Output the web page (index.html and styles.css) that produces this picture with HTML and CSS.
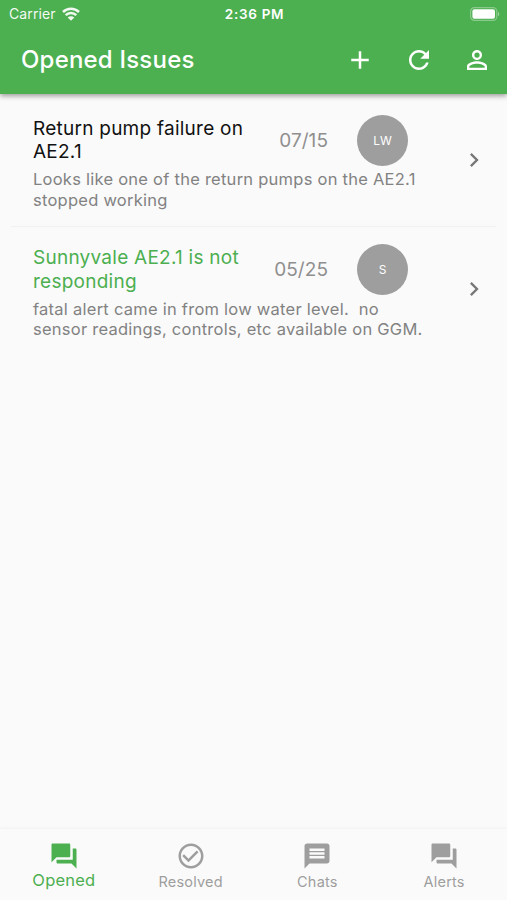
FILE: index.html
```
<!DOCTYPE html>
<html lang="en">
<head>
<meta charset="utf-8">
<title>Opened Issues</title>
<link rel="stylesheet" href="styles.css">
</head>
<body>
<svg class="defs" aria-hidden="true">
  <symbol id="forum" viewBox="0 0 24 24"><path d="M21 6h-2v9H6v2c0 .55.45 1 1 1h11l4 4V7c0-.55-.45-1-1-1zm-4 6V3c0-.55-.45-1-1-1H3c-.55 0-1 .45-1 1v14l4-4h10c.55 0 1-.45 1-1z"/></symbol>
  <symbol id="chevron" viewBox="0 0 24 24"><path d="M10 6 8.59 7.41 13.17 12l-4.58 4.59L10 18l6-6z"/></symbol>
</svg>
<div class="app">
  <header class="header">
    <div class="status">
      <div class="carrier"><span>Carrier</span>
        <svg class="wifi" viewBox="0 0 18 14"><path d="M1 5C5.400 .7 12.600 .7 17 5M3.700 8.200c3-2.900 7.600-2.900 10.600 0" fill="none" stroke="currentColor" stroke-width="2.500"/><path d="M5.700 10.500c1.900-1.800 4.700-1.800 6.600 0L9 13.800z"/></svg>
      </div>
      <div class="time">2:36 PM</div>
      <div class="power"><svg class="battery" viewBox="0 0 30 14"><rect x=".6" y=".6" width="26.200" height="12.800" rx="3.800" fill="none" stroke="currentColor" stroke-opacity=".35" stroke-width="1.200"/><rect x="2.400" y="2.300" width="22.600" height="9.400" rx="2"/><path d="M28 4.800c1.800.7 1.800 3.700 0 4.400z" opacity=".45"/></svg></div>
    </div>
    <div class="toolbar">
      <h1>Opened Issues</h1>
      <div class="actions">
        <svg viewBox="0 0 24 24"><path d="M19 13h-6v6h-2v-6H5v-2h6V5h2v6h6v2z"/></svg>
        <svg viewBox="0 0 24 24"><path d="M17.650 6.350C16.200 4.900 14.210 4 12 4c-4.420 0-7.990 3.580-7.990 8s3.570 8 7.990 8c3.730 0 6.840-2.550 7.730-6h-2.080c-.82 2.330-3.040 4-5.650 4-3.310 0-6-2.690-6-6s2.690-6 6-6c1.660 0 3.140.69 4.220 1.780L13 11h7V4l-2.350 2.350z"/></svg>
        <svg viewBox="0 0 24 24"><path d="M12 5.900a2.100 2.100 0 1 1 0 4.200 2.100 2.100 0 0 1 0-4.200m0 9c2.970 0 6.100 1.460 6.100 2.100v1.100H5.900V17c0-.64 3.130-2.100 6.100-2.100M12 4C9.790 4 8 5.790 8 8s1.790 4 4 4 4-1.790 4-4-1.790-4-4-4zm0 9c-2.670 0-8 1.340-8 4v3h16v-3c0-2.660-5.330-4-8-4z"/></svg>
      </div>
    </div>
  </header>
  <main class="list">
    <article class="issue">
      <div class="content">
        <div class="summary">
          <h2>Return pump failure on<br>AE2.1</h2>
          <time>07/15</time>
          <div class="avatar">LW</div>
        </div>
        <p>Looks like one of the return pumps on the AE2.1<br>stopped working</p>
      </div>
      <svg class="chevron"><use href="#chevron"/></svg>
    </article>
    <article class="issue unread">
      <div class="content">
        <div class="summary">
          <h2>Sunnyvale AE2.1 is not<br>responding</h2>
          <time>05/25</time>
          <div class="avatar">S</div>
        </div>
        <p>fatal alert came in from low water level.&nbsp; no<br>sensor readings, controls, etc available on GGM.</p>
      </div>
      <svg class="chevron"><use href="#chevron"/></svg>
    </article>
  </main>
  <nav class="tabs">
    <div class="tab active"><svg><use href="#forum"/></svg><span>Opened</span></div>
    <div class="tab"><svg viewBox="0 0 24 24"><path d="M16.590 7.580 10 14.170l-3.590-3.580L5 12l5 5 8-8zM12 2C6.480 2 2 6.480 2 12s4.480 10 10 10 10-4.480 10-10S17.520 2 12 2zm0 18c-4.420 0-8-3.580-8-8s3.580-8 8-8 8 3.580 8 8-3.580 8-8 8z"/></svg><span>Resolved</span></div>
    <div class="tab"><svg viewBox="0 0 24 24"><path d="M20 2H4c-1.100 0-1.990.9-1.990 2L2 22l4-4h14c1.100 0 2-.9 2-2V4c0-1.100-.9-2-2-2zm-2 12H6v-2h12v2zm0-3H6V9h12v2zm0-3H6V6h12v2z"/></svg><span>Chats</span></div>
    <div class="tab"><svg><use href="#forum"/></svg><span>Alerts</span></div>
  </nav>
</div>
</body>
</html>
```
FILE: styles.css
```
* { box-sizing: border-box; }
body { margin: 0; background: #fafafa; font-family: Inter, "Liberation Sans", sans-serif; }
svg { fill: currentColor; display: block; flex: none; }
.defs { display: none; }
h1, h2, p { margin: 0; }
.app { height: 900px; display: flex; flex-direction: column; overflow: hidden; }
.header { height: 94px; flex: none; background: #4caf50; color: #fff; box-shadow: 0 2px 5px rgba(0,0,0,.38); }
.status { height: 27px; display: grid; grid-template-columns: 1fr auto 1fr; align-items: center; padding: 0 7px 0 9px; }
.carrier { display: flex; align-items: center; gap: 6px; font-size: 14px; letter-spacing: .12px; opacity: .93; }
.wifi { width: 18px; height: 14px; }
.time { font-size: 13.500px; font-weight: 600; letter-spacing: .7px; }
.power { display: flex; justify-content: flex-end; }
.battery { width: 30px; height: 14px; }
.toolbar { height: 66px; display: flex; align-items: center; justify-content: space-between; padding: 0 15px 0 21px; }
h1 { font-size: 24px; line-height: 30px; font-weight: 500; letter-spacing: .2px; }
.actions { display: flex; gap: 28.500px; }
.actions svg { width: 30px; height: 30px; }
.list { flex: 1; padding: 0 11px; }
.issue { height: 130px; display: flex; align-items: flex-start; padding: 17px 8.500px 0 22px; }
.issue:first-child { height: 133px; padding-top: 20.500px; border-bottom: 1px solid #f1f1f1; }
.content { flex: 1; }
.summary { display: grid; grid-template-columns: 220px 96px 59px; align-items: center; }
h2 { font-size: 19px; line-height: 23.200px; font-weight: 400; letter-spacing: .25px; color: #111; white-space: nowrap; }
.unread h2 { color: #4caf50; }
time { text-align: right; padding-right: 21px; font-size: 19px; color: #8f8f8f; letter-spacing: .05px; }
.avatar { width: 51px; height: 51px; justify-self: end; border-radius: 50%; background: #9e9e9e; color: #fff; display: grid; place-items: center; font-size: 12px; }
p { font-size: 16.500px; line-height: 20.600px; color: #828282; letter-spacing: .25px; white-space: nowrap; margin-top: 3.500px; }
.chevron { width: 28px; height: 28px; margin-top: 31px; color: #777; }
.tabs { height: 71px; flex: none; display: grid; grid-template-columns: repeat(4, 1fr); box-shadow: 0 -1px 3px rgba(0,0,0,.04); color: #9e9e9e; }
.tab { display: flex; flex-direction: column; align-items: center; padding: 11.500px 0 0 1px; }
.tab span { font-size: 14.500px; line-height: 21px; letter-spacing: .2px; }
.tab svg { width: 30px; height: 30px; }
.tab.active span { font-size: 16.500px; line-height: 19px; }
.active { color: #4caf50; }
```
